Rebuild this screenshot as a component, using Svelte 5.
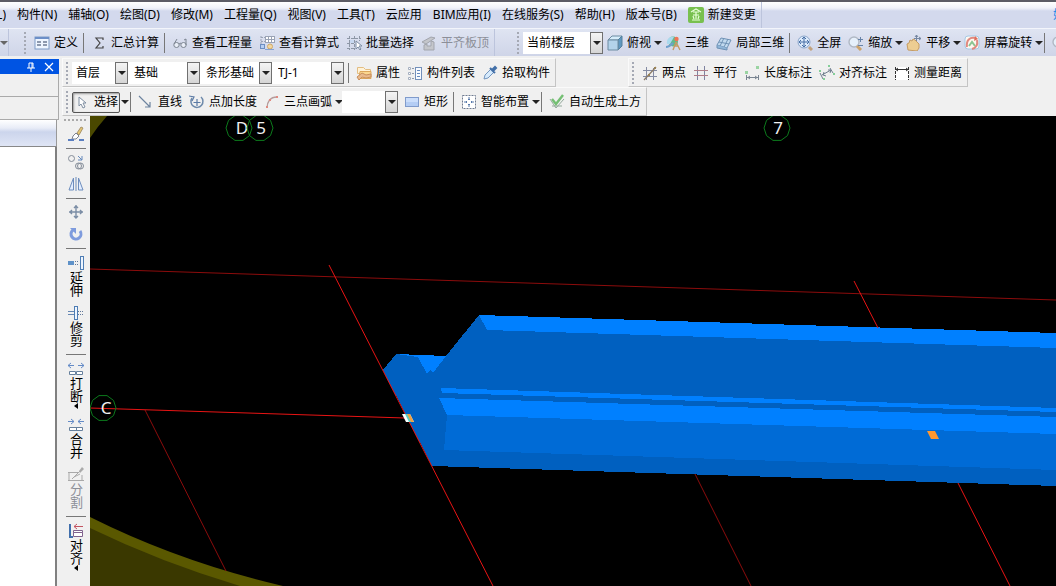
<script lang="ts">
  interface Tool {
    label?: string;
    icon?: string;
    caret?: boolean;
    sep?: boolean;
    disabled?: boolean;
    pressed?: boolean;
  }

  const menus = [
    '构件(N)', '辅轴(O)', '绘图(D)', '修改(M)', '工程量(Q)', '视图(V)', '工具(T)',
    '云应用', 'BIM应用(I)', '在线服务(S)', '帮助(H)', '版本号(B)'
  ];

  const mainTools: Tool[] = [
    { label: '定义', icon: 'define' },
    { sep: true },
    { label: '汇总计算', icon: 'sum' },
    { sep: true },
    { label: '查看工程量', icon: 'glasses' },
    { label: '查看计算式', icon: 'formula' },
    { label: '批量选择', icon: 'batch' },
    { label: '平齐板顶', icon: 'slab', disabled: true }
  ];

  const viewTools: Tool[] = [
    { label: '俯视', icon: 'cube', caret: true },
    { label: '三维', icon: 'orbit' },
    { label: '局部三维', icon: 'partial' },
    { sep: true },
    { label: '全屏', icon: 'fit' },
    { label: '缩放', icon: 'zoom', caret: true },
    { label: '平移', icon: 'pan', caret: true },
    { label: '屏幕旋转', icon: 'screen', caret: true },
    { sep: true }
  ];

  const combos = [
    { name: '楼层', value: '首层', size: 'short' },
    { name: '构件类型', value: '基础' },
    { name: '构件', value: '条形基础' },
    { name: '名称', value: 'TJ-1' }
  ];

  const componentTools: Tool[] = [
    { sep: true },
    { label: '属性', icon: 'property' },
    { label: '构件列表', icon: 'list' },
    { label: '拾取构件', icon: 'pick' }
  ];

  const axisTools: Tool[] = [
    { label: '两点', icon: 'twoPoint' },
    { label: '平行', icon: 'parallel' },
    { label: '长度标注', icon: 'length' },
    { label: '对齐标注', icon: 'alignDim' },
    { label: '测量距离', icon: 'measure' }
  ];

  const drawTools: Tool[] = [
    { label: '选择', icon: 'cursor', caret: true, pressed: true },
    { sep: true },
    { label: '直线', icon: 'line' },
    { label: '点加长度', icon: 'pointLength' },
    { label: '三点画弧', icon: 'arc', caret: true }
  ];

  const placeTools: Tool[] = [
    { label: '矩形', icon: 'rect' },
    { sep: true },
    { label: '智能布置', icon: 'smart', caret: true },
    { sep: true },
    { label: '自动生成土方', icon: 'check' }
  ];

  const sideTools: (Tool & { hint?: string })[] = [
    { icon: 'brush', hint: '删除' },
    { sep: true },
    { icon: 'copy', hint: '复制' },
    { icon: 'mirror', hint: '镜像' },
    { sep: true },
    { icon: 'move', hint: '移动' },
    { icon: 'rotate', hint: '旋转' },
    { sep: true },
    { label: '延伸', icon: 'extend' },
    { label: '修剪', icon: 'trim' },
    { sep: true },
    { label: '打断', icon: 'breakUp', caret: true },
    { label: '合并', icon: 'merge' },
    { label: '分割', icon: 'split', disabled: true },
    { sep: true },
    { label: '对齐', icon: 'align', caret: true }
  ];

  const icons: Record<string, string> = {
    define: '<rect x="1" y="2" width="14" height="12" fill="#eef5ff" stroke="#7f9cc6"/><path d="M1 3h14" stroke="#6c8fc8" stroke-width="2"/><path d="M3 7h4M3 10h4M9 7h4M9 10h4" stroke="#8d99ae" stroke-width="2"/>',
    sum: '<path d="M12 5V3H5l4 5-4 5h7v-2" fill="none" stroke="#444" stroke-width="1.2"/>',
    glasses: '<ellipse cx="4.5" cy="10" rx="2.7" ry="2.5" fill="#e9eef7" stroke="#7b8490"/><ellipse cx="11.5" cy="10" rx="2.7" ry="2.5" fill="#e9eef7" stroke="#7b8490"/><path d="M2 9l3-5M14 10V4l-2 1M7 9l2-1" fill="none" stroke="#7b8490"/>',
    formula: '<path d="M2 1v8M2 2.500h4M2 6.500h4" stroke="#9aa3b5" stroke-dasharray="2 1"/><rect x="6.500" y="1.500" width="9" height="6" fill="#fff" stroke="#9aa3b5"/><path d="M7 4.500h8M9.500 2v5M12.500 2v5" stroke="#9aa3b5"/><rect x="1.500" y="9.500" width="4" height="4" fill="#b7cff2" stroke="#6d8fc2"/><circle cx="11" cy="11.500" r="2.5" fill="#f2d7a0" stroke="#cfa866"/><path d="M6 14.500h9" stroke="#86a3d3"/>',
    batch: '<path d="M1 3.500h14M1 8.500h7M1 13.500h7M3.500 1v14M8.500 1v14M13.500 1v5" stroke="#8d97a6" stroke-dasharray="3 1"/><rect x="4" y="5" width="4" height="3" fill="#c8d9f2"/><path d="M10 6v8l2-2 2 3 1-1-2-3h3z" fill="#fff" stroke="#7c8da5"/>',
    slab: '<path d="M1 7l9-5 4 1-9 6zM3 10v5h10V7l-3-1v5H6V9z" fill="#c4c6cb" stroke="#a2a5ad"/>',
    cube: '<path d="M1 5l4-4h10l-4 4z" fill="#d5ecfa" stroke="#6d8ca2"/><path d="M11 5l4-4v10l-4 4z" fill="#5f98c0" stroke="#55809d"/><path d="M1 5h10v10H1z" fill="#b3d3ea" stroke="#6d8ca2"/>',
    orbit: '<circle cx="8" cy="6.500" r="5" fill="#62b98a"/><path d="M2 9C1 4 5 1 9 2L5 9z" fill="#a9d9ed"/><path d="M1 12C3 12 6 10 8 8" fill="none" stroke="#6fa0cd" stroke-width="2"/><path d="M11 7l-3 8M11 7l4 8M9 11h4" stroke="#c59a62" stroke-width="1.4"/><circle cx="11.500" cy="4" r="2.2" fill="#ef7455"/>',
    partial: '<path d="M1 10l4-7 10 2-4 8z" fill="#c2daef" stroke="#6f92b5"/><path d="M4 11l4-8M8 12l4-8M3 7l10 2" stroke="#6f92b5"/><path d="M1 10v3l10 2v-2" fill="#8fb5d8" stroke="#6f92b5"/>',
    fit: '<circle cx="7" cy="7" r="6" fill="#dceafb" stroke="#8aa5ca"/><path d="M7 2v10M2 7h10M5 4l2-2 2 2M5 10l2 2 2-2M4 5L2 7l2 2M10 5l2 2-2 2" fill="none" stroke="#476fa5"/><path d="M12 12l3 3" stroke="#c2a27e" stroke-width="3"/>',
    zoom: '<circle cx="6" cy="7" r="5" fill="#e6f0fb" stroke="#b0b8c4" stroke-width="1.4"/><path d="M9 11l4 4" stroke="#cca36c" stroke-width="3"/><path d="M12.500 2v5M10 4.500h5M10 10.500h5" stroke="#6783a8"/>',
    pan: '<path d="M2 15L1 9l2-1 1-3 2 1 1-2 2 1 2 2 2 2v4l-2 3z" fill="#edcd92" stroke="#c59c64"/><path d="M10.500 0v6M8 3.500h7M9 2l1.500-2L12 2M13 2l2 1.500L13 5" fill="none" stroke="#7587a2"/>',
    screen: '<rect x="1" y="1" width="14" height="13" rx="3" fill="#fff8f0" stroke="#a1c9e7"/><path d="M3 12C2 5 6 2 11 3M13 5c1 5-1 8-5 9" fill="none" stroke="#e08a80" stroke-width="2"/><path d="M11 1l3 3-4 2z" fill="#dd6e5e"/><path d="M5 11l3-4 3 4" fill="none" stroke="#8cc592" stroke-width="2"/>',
    property: '<path d="M1.500 2.500h6l2 2h5v4h-13z" fill="#fff2d6" stroke="#e3bd82"/><path d="M4 6.500h11v7H3z" fill="#fbd78f" stroke="#dca75c"/><path d="M1 12l5-4 4 2 5-1v3l-5 1-4-1-3 3z" fill="#e8b98c" stroke="#c98f5c"/>',
    list: '<path d="M1.500 2.500h2v2h-2zM1.500 7.500h2v2h-2zM1.500 12.500h2v2h-2z" fill="#fff" stroke="#a5afc0"/><path d="M5 3.500h2M5 8.500h2M5 13.500h2" stroke="#8b98ad"/><rect x="8.500" y="2.500" width="6" height="12" fill="#f8fbff" stroke="#7390bb"/><path d="M10 5.500h3M10 8.500h3M10 11.500h3" stroke="#6589bd"/>',
    pick: '<path d="M2 14l1-4 6-6 3 3-6 6z" fill="#d6eafc" stroke="#7496bf"/><path d="M8 3l5 5M11 4l2-2 1 1-2 2z" fill="#3f7fc1" stroke="#4370a8" stroke-width="2"/>',
    twoPoint: '<path d="M4.500 2v13M11.500 3v12M1 5.500h14M1 11.500h14" stroke="#858ca3"/><path d="M2 15L14 2" stroke="#8a7a66" stroke-width="1.2"/><path d="M6 9h2v2H6zM12 2h2v2h-2z" fill="#9a8355"/>',
    parallel: '<path d="M4.500 1v14M11.500 1v14" stroke="#7f83a0"/><path d="M1 5.500h14M1 10.500h14" stroke="#b07d88"/>',
    length: '<path d="M2.500 10v5M14.500 10v5M3 12.500h12M6 11l-2 1.500L6 14M11 11l2 1.500-2 1.500" fill="none" stroke="#7a8592"/><path d="M1 6h3v3H1zM12 1h3v3h-3z" fill="#9ad4a2"/>',
    alignDim: '<path d="M1 8l3 6M11 3l3 5M3 10l9-5M5 7L4 10l3 1M9 5l3 0-1 3" fill="none" stroke="#707f8f"/><path d="M0 5h2v2H0zM9 0h2v2H9zM4 13h2v2H4zM14 8h2v2h-2z" fill="#84cf98"/>',
    measure: '<path d="M1 2h14v13H1z" fill="#fff"/><path d="M1.500 2v13M14.500 2v13" stroke="#333" stroke-dasharray="3 1"/><path d="M2 4.500h12M4 3L2 4.500 4 6M12 3l2 1.500L12 6" fill="none" stroke="#333"/>',
    cursor: '<path d="M5 3v9l2-2 2 4 2-1-2-4h3z" fill="#fff" stroke="#7f8ea1"/>',
    line: '<path d="M1 2l11 11M12 8v5H7" fill="none" stroke="#6c839f" stroke-width="1.2"/>',
    pointLength: '<path d="M3 4a6 6 0 1 0 9-1" fill="none" stroke="#6e8aab" stroke-width="1.5"/><path d="M0 2l5 1-2 4M8 5v7M4.500 8.500h7" fill="none" stroke="#5c7ba5" stroke-width="1.2"/>',
    arc: '<path d="M3 14C3 8 6 3 13 3" fill="none" stroke="#b59c9c" stroke-width="1.3"/><path d="M2 12h2v2H2zM5 5h2v2H5zM12 2h2v2h-2z" fill="#e08a80"/>',
    rect: '<rect x="1.500" y="3.500" width="13" height="9" fill="#b4cdf4" stroke="#809bcb"/><path d="M2 4h12v4H2z" fill="#cbdefb"/>',
    smart: '<rect x="1.500" y="1.500" width="13" height="13" fill="#fff" stroke="#6f7b90" stroke-dasharray="2 1"/><path d="M8 3v3M8 10v3M3 8h3M10 8h3M7 5l1 1 1-1M7 11l1-1 1 1M5 7l1 1-1 1M11 7l-1 1 1 1" fill="none" stroke="#5678aa"/>',
    check: '<path d="M1 5l6 9 8-9M3 12h10" fill="none" stroke="#93a99b"/><path d="M3 5l4 5 7-9" fill="none" stroke="#74bf73" stroke-width="2.4"/>',
    brush: '<path d="M9 7l4-6 2 1-4 7z" fill="#e7c76f" stroke="#a8946c"/><path d="M5 10l3-3 3 3-3 3H4z" fill="#fff" stroke="#7d8390"/><path d="M0 14h6M11 14h5" stroke="#5b7fc0" stroke-width="2"/>',
    copy: '<circle cx="3.500" cy="4.500" r="3" fill="none" stroke="#848c98"/><circle cx="10.500" cy="12" r="3" fill="none" stroke="#848c98"/><circle cx="12.500" cy="12" r="3" fill="none" stroke="#848c98"/><path d="M10 2l4 4M14 2v4h-4" fill="none" stroke="#6488bb"/>',
    mirror: '<path d="M5.500 2v12H1zM10.500 2v12H15z" fill="#e2edff" stroke="#6d8dbd"/><path d="M8 1v14" stroke="#6d8dbd"/>',
    move: '<path d="M8 1v14M1 8h14M6 4l2-2 2 2M6 12l2 2 2-2M4 6L2 8l2 2M12 6l2 2-2 2" fill="none" stroke="#7b8da5" stroke-width="1.4"/>',
    rotate: '<path d="M5 4a5 5 0 1 0 7 1" fill="none" stroke="#7e9bdd" stroke-width="3"/><path d="M2 2h6v6z" fill="#7e9bdd"/>',
    extend: '<rect x="0" y="6" width="6" height="4" fill="#5e91c8"/><path d="M7 6.500h4M7 9.500h4" stroke="#61789a" stroke-dasharray="1 1"/><rect x="12.500" y="1.500" width="3" height="13" fill="#edf5ff" stroke="#4e7db4"/>',
    trim: '<path d="M0 6.500h6M0 9.500h6" stroke="#6587b4"/><rect x="6.500" y="1.500" width="3" height="13" fill="#edf5ff" stroke="#4e7db4"/><path d="M10 6.500h6M10 9.500h6" stroke="#61789a" stroke-dasharray="1 1"/>',
    breakUp: '<path d="M0 4.500h6M10 4.500h6M3 2L0 4.500 3 7M13 2l3 2.500L13 7" fill="none" stroke="#648bc7"/><path d="M1.500 10.500h6v3h-6zM8.500 10.500h6v3h-6z" fill="#fff" stroke="#66809d"/>',
    merge: '<path d="M0 4.500h6M10 4.500h6M3 2l3 2.500L3 7M13 2l-3 2.500L13 7" fill="none" stroke="#648bc7"/><path d="M1.500 10.500h13v3h-13zM8.500 10.500v3" fill="#fff" stroke="#66809d"/>',
    split: '<path d="M0 5.500h10M1 5v8M14 8v5M0 13.500h16M4 12l9-9M6 10l6-3" fill="none" stroke="#a9a9a9"/><path d="M11 4l3-4 2 2-4 4z" fill="#aaa"/>',
    align: '<path d="M2 1v14M1 14h4" stroke="#416fac" stroke-width="2"/><path d="M5.500 7.500h9v2h-9zM5.500 9.500h9v4h-9z" fill="#fff" stroke="#80628e"/><path d="M6 3.500h9M9 1L6 3.500 9 6" fill="none" stroke="#c35462"/>',
    change: '<rect width="16" height="16" rx="2" fill="#78c04f"/><path d="M3 5l5-3 5 3M5 5h6M8 5v7M5 8h6M4 13h8M5 9l1 3M11 9l-1 3" fill="none" stroke="#e7ffd9" stroke-width="1.2"/>'
  };

  const bubbles = [
    { text: 'D', x: 239, y: 128, tx: 242 },
    { text: '5', x: 260, y: 128, tx: 261 },
    { text: '7', x: 777, y: 128, tx: 778 },
    { text: 'C', x: 103, y: 408, tx: 106 }
  ];

  // the viewer draws its axis circles as coarse ten-sided rings
  function ring(cx: number, cy: number) {
    return Array.from({ length: 10 }, (_, i) => {
      const angle = (Math.PI * i) / 5;
      return `${(cx + 13 * Math.cos(angle)).toFixed(1)},${(cy + 13 * Math.sin(angle)).toFixed(1)}`;
    }).join(' ');
  }
</script>

{#snippet icon(name: string)}
  <svg class="icon" viewBox="0 0 16 16" aria-hidden="true">{@html icons[name]}</svg>
{/snippet}

{#snippet tools(items: Tool[])}
  {#each items as item}
    {#if item.sep}
      <span class="sep"></span>
    {:else}
      <button type="button" class="tool" class:pressed={item.pressed} disabled={item.disabled}>
        {@render icon(item.icon ?? '')}
        <span>{item.label}</span>
        {#if item.caret}<i class="caret"></i>{/if}
      </button>
    {/if}
  {/each}
{/snippet}

{#snippet combo(name: string, value: string, size = '')}
  <span class="combo {size}">
    <select aria-label={name}><option>{value}</option></select>
    <span class="drop"><i class="caret"></i></span>
  </span>
{/snippet}

<div class="app">
  <nav class="menubar">
    <button type="button" class="cut">(L)</button>
    {#each menus as menu}
      <button type="button">{menu}</button>
    {/each}
    <button type="button" class="change">{@render icon('change')}新建变更</button>
    <a class="account" href="#account">妙</a>
  </nav>

  <div class="mainbar">
    <button type="button" class="overflow" aria-label="更多"><i class="caret"></i></button>
    <div class="strip first">
      <span class="grip"></span>
      {@render tools(mainTools)}
    </div>
    <div class="strip">
      <span class="grip"></span>
      {@render combo('显示范围', '当前楼层', 'wide')}
      {@render tools(viewTools)}
      <button type="button" class="tool" aria-label="缩放窗口">{@render icon('zoom')}</button>
    </div>
  </div>

  <div class="body">
    <aside class="dock">
      <header>
        <button type="button" aria-label="固定">
          <svg class="mini" viewBox="0 0 10 10"><path d="M3 6V1h4v5M6 1v5M1 6h8M5 6v4" fill="none" stroke="#fff" /></svg>
        </button>
        <button type="button" aria-label="关闭">
          <svg class="mini" viewBox="0 0 10 10"><path d="M1 1l8 8M9 1L1 9" stroke="#fff" stroke-width="1.2" /></svg>
        </button>
      </header>
      <div class="row"></div>
      <div class="row"></div>
      <div class="column-head"></div>
      <div class="tree"></div>
    </aside>

    <main>
      <div class="bar">
        <div class="strip raised">
          <span class="grip"></span>
          <div class="combos">
            {#each combos as item}
              {@render combo(item.name, item.value, item.size)}
            {/each}
          </div>
          {@render tools(componentTools)}
        </div>
        <div class="strip raised axis">
          <span class="grip"></span>
          {@render tools(axisTools)}
        </div>
      </div>
      <div class="bar">
        <div class="strip raised">
          <span class="grip"></span>
          {@render tools(drawTools)}
          <div class="combos">
            {@render combo('弧方向', '', 'short')}
          </div>
          {@render tools(placeTools)}
        </div>
      </div>

      <div class="work">
        <div class="sidebar">
          <span class="grip-h"></span>
          {#each sideTools as item}
            {#if item.sep}
              <span class="sep-h"></span>
            {:else}
              <button
                type="button"
                class="side"
                class:labelled={item.label}
                aria-label={item.hint}
                disabled={item.disabled}
              >
                {@render icon(item.icon ?? '')}
                {#if item.label}<span>{item.label}</span>{/if}
                {#if item.caret}<i class="caret-left"></i>{/if}
              </button>
            {/if}
          {/each}
        </div>

        <div class="canvas">
          <svg class="scene" viewBox="90 116 966 470" preserveAspectRatio="xMinYMin slice">
            <!-- orbit ring -->
            <path d="M90 116h17Q98 126 90 138z" fill="#4a4800" />
            <path d="M90 517Q180 562 283 586H90z" fill="#5a5800" />
            <path d="M90 528Q160 562 240 586H90z" fill="#3a3800" />

            <!-- axis grid -->
            <g class="far">
              <path d="M90 269L1056 300M145 410L226 571M695 474L751 586" />
            </g>

            <!-- strip foundation -->
            <g shape-rendering="crispEdges">
              <path d="M479 315L1056 333V486L432 466L383 370L396 354L446 356z" fill="#0060c0" />
              <path d="M479 315L1056 333V348L487 330z" fill="#0080ff" />
              <path d="M396 354L446 356L433 373L430 370L427 374L418 357z" fill="#0080ff" />
              <path d="M441 388L1056 408V412L442 393z" fill="#0080ff" />
              <path d="M439 398L1056 417V434L447 415z" fill="#0080ff" />
              <path d="M447 415L1056 434V470L444 450z" fill="#006bd6" />
            </g>

            <g class="near">
              <path d="M90 408L405 418M329 265L493 586M854 281L878 328M958 483L1010 586" />
            </g>

            <path d="M402 414h8l4 8h-8z" fill="#fff" />
            <path d="M405 414h3l4 8h-3z" fill="#55d0c8" />
            <path d="M407 414h3l4 8h-3z" fill="#f0a040" />
            <path d="M927 431h8l4 8h-8z" fill="#ff9830" />

            {#each bubbles as bubble}
              <polygon points={ring(bubble.x, bubble.y)} />
              <text x={bubble.tx} y={bubble.y + 6}>{bubble.text}</text>
            {/each}
          </svg>
        </div>
      </div>
    </main>
  </div>
</div>

<style>
  :global(body) {
    margin: 0;
    background: #f0f0f0;
  }

  .app {
    display: flex;
    flex-direction: column;
    height: 100vh;
    overflow: hidden;
    color: #000;
    font: 12px/16px 'Noto Sans', 'Noto Sans CJK SC', sans-serif;
    white-space: nowrap;
  }

  button,
  select {
    margin: 0;
    padding: 0;
    border: 0;
    background: none;
    color: inherit;
    font: inherit;
  }

  .icon {
    flex: none;
    width: 16px;
    height: 16px;
  }

  .menubar {
    display: flex;
    flex: none;
    align-items: center;
    gap: 11px;
    height: 26px;
    border-top: 2px solid #5c5c66;
    background: linear-gradient(#fff 0, #f0f2fa 6px, #d3d9ed 9px, #d3d9ed 100%);
  }

  .menubar .cut {
    display: flex;
    justify-content: flex-end;
    width: 6px;
    overflow: hidden;
  }

  .change {
    display: flex;
    align-items: center;
    align-self: stretch;
    gap: 4px;
    padding-right: 5px;
    border-right: 1px solid #bcc4dc;
  }

  .account {
    width: 3px;
    margin-left: auto;
    overflow: hidden;
    color: #1b86e8;
    text-decoration: none;
  }

  .mainbar {
    display: flex;
    flex: none;
    height: 27px;
    overflow: hidden;
    border-top: 1px solid #f3f5fb;
    background: linear-gradient(#dfe4f2, #cfd5e8);
  }

  .overflow {
    width: 10px;
    border-right: 1px solid #bcc4dc;
  }

  .strip {
    display: flex;
    flex: none;
    align-items: center;
  }

  .strip.first {
    margin: 0 20px 0 13px;
    border-right: 1px solid #bcc4dc;
    padding-right: 2px;
  }

  .grip {
    flex: none;
    width: 2px;
    height: 22px;
    margin: 0 4px 0 2px;
    background: repeating-linear-gradient(#a5a9b4 0 2px, transparent 2px 4px);
  }

  .tool {
    display: flex;
    flex: none;
    align-items: center;
    gap: 4px;
    height: 22px;
    padding: 0 3px 0 4px;
  }

  .tool:disabled,
  .side:disabled {
    color: #8c8f98;
  }

  .tool.pressed {
    position: relative;
    padding-left: 2px;
  }

  .tool.pressed::before {
    position: absolute;
    inset: 1px 8px 0 0;
    border: 1px solid #555;
    border-radius: 2px;
    box-shadow: inset 1px 1px 2px #999;
    content: '';
  }

  .caret {
    flex: none;
    display: block;
    width: 0;
    height: 0;
    border: 4px solid transparent;
    border-top-color: #222;
    border-bottom-width: 0;
  }

  .tool .caret {
    margin: 0 -4px 0 -1px;
  }

  .overflow .caret {
    border-top-color: #666;
  }

  .sep {
    flex: none;
    width: 1px;
    height: 20px;
    margin: 0 3px 0 2px;
    background: #777;
  }

  .combos {
    display: flex;
    margin-right: 2px;
  }

  .combo {
    display: grid;
    flex: none;
    width: 72px;
    height: 22px;
    background: #fff;
  }

  .combo.wide {
    width: 80px;
  }

  .combo.short {
    width: 56px;
  }

  .combo select,
  .drop {
    grid-area: 1 / 1;
  }

  .combo select {
    width: 100%;
    padding: 0 13px 0 6px;
    appearance: none;
    outline: 0;
  }

  .combo.wide select,
  .combo.short select {
    padding-left: 4px;
  }

  .drop {
    display: flex;
    align-items: center;
    justify-content: center;
    justify-self: end;
    box-sizing: border-box;
    width: 13px;
    border: 1px solid #707070;
    background: linear-gradient(#f4f4f4, #d5d5d5);
    pointer-events: none;
  }

  .body {
    display: flex;
    flex: 1;
    min-height: 0;
    padding-top: 2px;
  }

  .dock {
    display: flex;
    flex: none;
    flex-direction: column;
    box-sizing: border-box;
    width: 62px;
    padding: 1px 3px 0 0;
  }

  .dock header {
    display: flex;
    align-items: center;
    justify-content: flex-end;
    gap: 8px;
    height: 15px;
    padding-right: 5px;
    background: #0054e3;
  }

  .mini {
    display: block;
    width: 10px;
    height: 10px;
  }

  .row {
    height: 22px;
    border-right: 1px solid #aaa;
    border-bottom: 1px solid #aaa;
  }

  .column-head {
    height: 26px;
    margin-right: 2px;
    border-right: 1px solid #999;
    border-bottom: 1px solid #888;
    background: linear-gradient(#fff, #e8ecf7 8px, #ccd5ec 12px, #dfe5f5);
  }

  .tree {
    flex: 1;
    margin-right: 2px;
    border-right: 2px solid #808080;
    background: #fff;
  }

  main {
    display: flex;
    flex: 1;
    flex-direction: column;
    min-width: 0;
  }

  .bar {
    display: flex;
    flex: none;
    height: 29px;
  }

  .raised {
    box-sizing: border-box;
    padding: 0 2px 0 1px;
    border: 1px solid #fafafa;
    border-right-color: #c4c4c4;
    border-bottom-color: #c4c4c4;
  }

  .axis {
    margin-left: 72px;
  }

  .work {
    display: flex;
    flex: 1;
    min-height: 0;
  }

  .sidebar {
    display: flex;
    flex: none;
    flex-direction: column;
    align-items: center;
    box-sizing: border-box;
    width: 28px;
    padding-top: 3px;
  }

  .grip-h {
    width: 24px;
    height: 2px;
    margin-bottom: 2px;
    background: repeating-linear-gradient(90deg, #aaa 0 2px, transparent 2px 4px);
  }

  .sep-h {
    flex: none;
    width: 20px;
    height: 1px;
    margin: 3px 0 2px;
    background: #777;
  }

  .side {
    display: flex;
    flex: none;
    flex-direction: column;
    align-items: center;
    padding: 3px 0;
  }

  .side.labelled {
    padding: 4px 0;
  }

  .side span {
    font-size: 13px;
    line-height: 16px;
    writing-mode: vertical-rl;
  }

  .caret-left {
    width: 0;
    height: 0;
    border: 3px solid transparent;
    border-right: 4px solid #000;
    border-left-width: 0;
  }

  .canvas {
    flex: 1;
    min-width: 0;
    overflow: hidden;
    background: #000;
  }

  .scene {
    display: block;
    width: 100%;
    height: 100%;
  }

  .far path,
  .near path {
    fill: none;
    stroke: #8c0c0c;
  }

  .near path {
    stroke: #e81414;
  }

  polygon {
    fill: none;
    stroke: #0c7a1c;
  }

  text {
    fill: #f0f0f0;
    font-size: 17px;
    text-anchor: middle;
  }
</style>
